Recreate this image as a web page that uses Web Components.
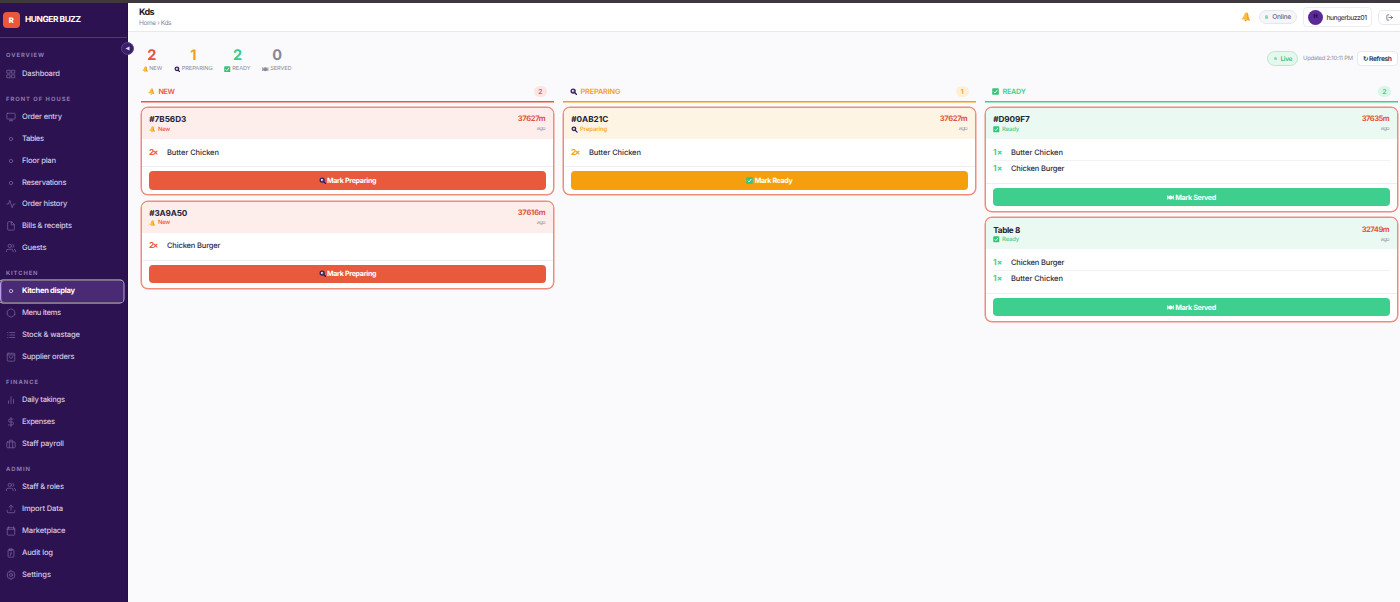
<!DOCTYPE html>
<html lang="en">
<head>
<meta charset="utf-8">
<title>Kds</title>
<style>
html,body{margin:0;height:100%;overflow:hidden;background:#fafafd}
body{font-family:Inter,"Open Sans",sans-serif;color:#24243a;text-rendering:geometricPrecision}
</style>
</head>
<body>
<kds-app></kds-app>
<script>
const define=(name,html,setup)=>customElements.define(name,class extends HTMLElement{
  connectedCallback(){
    if(this.shadowRoot)return;
    const r=this.attachShadow({mode:'open'});
    r.innerHTML=typeof html==='function'?html(this):html;
    if(setup)setup(this,r);
  }
});
const a=(el,n,d='')=>el.getAttribute(n)??d;

/* Single line of text whose tracking is adjusted to a set width */
define('fit-text','<style>:host{display:inline-block;white-space:nowrap;flex:none}span{display:inline-block}</style><span><slot></slot></span>',(el,r)=>{
  const w=parseFloat(a(el,'w')),n=el.textContent.length,s=r.querySelector('span');
  if(!w)return;
  el.style.width=w+'px';
  s.style.letterSpacing='0px';
  s.style.letterSpacing=((w-s.getBoundingClientRect().width)/Math.max(1,n-1)).toFixed(3)+'px';
});

const paths={
 grid:'<rect x="3" y="3" width="7" height="7"/><rect x="14" y="3" width="7" height="7"/><rect x="14" y="14" width="7" height="7"/><rect x="3" y="14" width="7" height="7"/>',
 monitor:'<rect x="2" y="3" width="20" height="14" rx="2"/><path d="M8 21h8M12 17v4"/>',
 dot:'<circle cx="12" cy="12" r="4"/>',
 activity:'<path d="M22 12h-4l-3 9L9 3l-3 9H2"/>',
 file:'<path d="M13 2H6a2 2 0 0 0-2 2v16a2 2 0 0 0 2 2h12a2 2 0 0 0 2-2V9zM13 2v7h7"/>',
 users:'<path d="M17 21v-2a4 4 0 0 0-4-4H5a4 4 0 0 0-4 4v2"/><circle cx="9" cy="7" r="4"/><path d="M23 21v-2a4 4 0 0 0-3-3.87M16 3.13a4 4 0 0 1 0 7.75"/>',
 hex:'<path d="M21 16V8a2 2 0 0 0-1-1.73l-7-4a2 2 0 0 0-2 0l-7 4A2 2 0 0 0 3 8v8a2 2 0 0 0 1 1.73l7 4a2 2 0 0 0 2 0l7-4A2 2 0 0 0 21 16z"/>',
 list:'<path d="M9 6h12M9 12h12M9 18h12M4 6h.5M4 12h.5M4 18h.5"/>',
 bag:'<rect x="3" y="3" width="18" height="19" rx="2"/><path d="M3 7h18M16 11a4 4 0 0 1-8 0"/>',
 bars:'<path d="M18 20V10M12 20V4M6 20v-6"/>',
 dollar:'<path d="M12 1v22M17 5H9.500a3.500 3.500 0 0 0 0 7h5a3.500 3.500 0 0 1 0 7H6"/>',
 case:'<rect x="2" y="7" width="20" height="14" rx="2"/><path d="M8 21V5a2 2 0 0 1 2-2h4a2 2 0 0 1 2 2v16"/>',
 upload:'<path d="M21 15v4a2 2 0 0 1-2 2H5a2 2 0 0 1-2-2v-4M17 8l-5-5-5 5M12 3v12"/>',
 store:'<rect x="3" y="4" width="18" height="18" rx="2"/><path d="M3 8h18M6 2v4M18 2v4"/>',
 clip:'<rect x="5" y="4" width="14" height="18" rx="2"/><path d="M9 2h6v4H9zM12 10v4M12 14l-2 4"/>',
 gear:'<circle cx="12" cy="12" r="3.500"/><path d="M10 2h4l1 3 3-.8 2.500 3.300-1 2.500 2.500 2-2.500 2 1 2.500-2.500 3.300-3-.8-1 3h-4l-1-3-3 .8-2.500-3.300 1-2.500-2.500-2 2.500-2-1-2.500L6 4.200l3 .8z"/>',
 logout:'<path d="M10 21H5a2 2 0 0 1-2-2V5a2 2 0 0 1 2-2h5M17 17l5-5-5-5M22 12H10"/>'
};
define('line-icon',el=>`<style>:host{display:block;flex:none;width:${a(el,'size','10')}px;height:${a(el,'size','10')}px}svg{display:block;width:100%;height:100%;overflow:visible}</style>
<svg viewBox="0 0 24 24" fill="none" stroke="currentColor" stroke-width="${a(el,'sw','1.8')}" stroke-linecap="round" stroke-linejoin="round">${paths[a(el,'name')]}</svg>`);

const pics={
 bell:'<g transform="rotate(8 8 8)"><path d="M8 .8C5.800.8 4.800 3.500 4.300 6.500 3.900 9 2.500 10.500.8 12.500h14.400C13.500 10.500 12.100 9 11.700 6.500 11.200 3.500 10.200.8 8 .8z" fill="#fcbd3c"/><path d="M8.500.8c1.700.3 2.700 2.700 3.200 5.700.4 2.500 1.800 4 3.500 6H11z" fill="#f39a25"/><path d="M6 13.200h4.500L8.200 15.300z" fill="#d9771b"/></g>',
 pan:'<circle cx="7.200" cy="7" r="6" fill="#33205c"/><circle cx="7" cy="6.800" r="2.800" fill="#f3e6ef"/><circle cx="7.400" cy="7.200" r="1.300" fill="#8a5a94"/><path d="M11 11l4 4" stroke="#33205c" stroke-width="3" stroke-linecap="round"/>',
 check:'<rect x=".5" y=".5" width="15" height="15" rx="2" fill="#35c47c"/><path d="M4 8.300l3 3L12.300 4.500" fill="none" stroke="#fff" stroke-width="2"/>',
 plate:'<ellipse cx="8" cy="8" rx="5.500" ry="4.800" fill="currentColor"/><path d="M1.500 3.500v9M14.500 3.500v9" stroke="currentColor" stroke-width="2.200"/>'
};
define('pic-icon',el=>`<style>:host{display:block;flex:none;width:${a(el,'size','6.5')}px;height:${a(el,'size','6.5')}px}svg{display:block;width:100%;height:100%}</style><svg viewBox="0 0 16 16">${pics[a(el,'name')]}</svg>`);

define('nav-item',el=>`<style>
:host{display:block;height:21.8px;padding-top:.6px;box-sizing:border-box;font-size:7.600px;font-weight:500;color:#d3c8e2}
div{height:20.2px;width:122.5px;box-sizing:border-box;padding-left:6px;display:flex;align-items:center;gap:6px;line-height:10px;border-radius:0 4px 4px 0}
line-icon{color:#77659a}
:host([active]) div{background:#4a2975;box-shadow:inset 1.300px 0 #b79bea,0 0 0 .5px #170a33,0 0 0 1.400px #d8d2e3;color:#fff;font-weight:650;border-radius:3px}
:host([active]) line-icon{color:#d8cdf0}
</style><div><line-icon name="${a(el,'icon')}"></line-icon><fit-text w="${a(el,'w')}">${a(el,'label').replace('&','&amp;')}</fit-text></div>`);

define('nav-group',el=>`<style>:host{display:block}p{margin:0;padding:10.9px 0 2.8px 6px;height:8px;line-height:8px;font-size:5.800px;font-weight:650;color:#8d7bab}</style>
<p><fit-text w="${a(el,'w')}">${a(el,'label')}</fit-text></p><slot></slot>`);

const nav=[
 ['OVERVIEW',38,[['grid','Dashboard',38]]],
 ['FRONT OF HOUSE',64,[['monitor','Order entry',40],['dot','Tables',22],['dot','Floor plan',34],['dot','Reservations',44.5],['activity','Order history',45.500],['file','Bills & receipts',50],['users','Guests',24.500]]],
 ['KITCHEN',31.500,[['dot','Kitchen display',53,1],['hex','Menu items',39],['list','Stock & wastage',58],['bag','Supplier orders',52.500]]],
 ['FINANCE',32,[['bars','Daily takings',43],['dollar','Expenses',33],['case','Staff payroll',42]]],
 ['ADMIN',24,[['users','Staff & roles',42],['upload','Import Data',41],['store','Marketplace',43.500],['clip','Audit log',31],['gear','Settings',29]]]
];
define('side-bar',`<style>
:host{display:block;width:128px;background:#2c1251;position:relative;box-sizing:border-box;border-right:1px solid #241044}
header{height:34px;border-bottom:1px solid #7c2b4d;display:flex;align-items:center;padding-left:3px;box-sizing:content-box}
.logo{width:16.500px;height:16.500px;border-radius:4px;background:#e9583b;color:#fff;font-size:7.500px;font-weight:800;display:flex;align-items:center;justify-content:center;margin-right:5.500px}
.name{font-size:8.400px;font-weight:750;color:#fff}
nav{padding-top:3.300px}
.toggle{position:absolute;left:121px;top:38.5px;width:13px;height:13px;box-sizing:border-box;border-radius:50%;background:#3b2069;border:1px solid #57418a;display:flex;align-items:center;justify-content:center;z-index:3}
.toggle svg{width:5px;height:5px}
</style><header><span class="logo">R</span><fit-text class="name" w="56">HUNGER BUZZ</fit-text></header>
<nav>${nav.map(g=>`<nav-group label="${g[0]}" w="${g[1]}">${g[2].map(i=>`<nav-item icon="${i[0]}" label="${i[1].replace('&','&amp;')}" w="${i[2]}" ${i[3]?'active':''}></nav-item>`).join('')}</nav-group>`).join('')}</nav>
<span class="toggle"><svg viewBox="0 0 10 10"><path d="M9 1v8L1 5z" fill="#e3dcf2"/></svg></span>`);

define('top-bar',`<style>
:host{display:flex;height:29px;box-sizing:border-box;background:#fff;border-bottom:1px solid #e9e8f0;padding-left:11px;justify-content:space-between}
.t{display:flex;flex-direction:column;padding-top:4px}
.h{font-size:9px;line-height:12px;font-weight:700;color:#1c1a2e}
.b{font-size:6.500px;line-height:8px;color:#85859a;margin-top:.3px}
.r{display:flex;align-items:center;flex:none;margin-right:-3px}
.on{margin-left:8px;width:38px;height:14.500px;box-sizing:border-box;border:1px solid #e6e6ef;border-radius:8px;background:#f6f6fa;display:flex;align-items:center;padding-left:5px;gap:3.800px;font-size:6.700px;color:#6c6c80;font-weight:450}
i{width:3.400px;height:3.400px;border-radius:50%;background:#7fdcb0}
.u{margin-left:6px;width:69px;height:20px;box-sizing:border-box;border:1px solid #ececf3;border-radius:4px;display:flex;align-items:center;padding-left:4px;gap:3.500px;font-size:6.800px;color:#444457;font-weight:450}
.av{width:15px;height:15px;border-radius:50%;background:#5a2a96;color:#1f0b42;font-weight:800;font-size:5.500px;display:flex;align-items:center;justify-content:center}
.o{margin-left:6px;width:25px;height:15px;box-sizing:border-box;border:1px solid #e8e8ef;border-radius:5px;display:flex;align-items:center;padding-left:7px;color:#55556a}
</style><div class="t"><fit-text class="h" w="15.500">Kds</fit-text><fit-text class="b" w="32.500">Home › Kds</fit-text></div>
<div class="r"><pic-icon name="bell" size="10"></pic-icon><span class="on"><i></i><fit-text w="19">Online</fit-text></span>
<span class="u"><span class="av">H</span><fit-text w="40.500">hungerbuzz01</fit-text></span><span class="o"><line-icon name="logout" size="7" sw="2.500"></line-icon></span></div>`);

define('stat-box',el=>`<style>:host{display:flex;flex-direction:column;align-items:center}
.n{font-size:14.500px;line-height:17px;font-weight:650;color:${a(el,'color')}}
.l{display:flex;align-items:center;gap:1.200px;margin-top:.8px;font-size:5.600px;line-height:8px;color:#8a8a9c}</style>
<span class="n">${a(el,'n')}</span><span class="l"><pic-icon name="${a(el,'icon')}" size="6.500"></pic-icon><fit-text w="${a(el,'w')}">${a(el,'label')}</fit-text></span>`);

define('stats-row',`<style>:host{display:flex;justify-content:space-between;align-items:flex-start;height:51px;box-sizing:border-box;padding:15.200px 0 0 .5px}
.s{display:flex;gap:11.800px}.r{display:flex;align-items:center;height:15px;margin-top:4px;font-size:6px}
.live{width:31px;height:15px;box-sizing:border-box;border:1px solid #b4ebcf;border-radius:8px;background:#e4f8ee;color:#39c283;font-weight:600;font-size:6.500px;display:flex;align-items:center;padding-left:6px;gap:3px}
i{width:3.400px;height:3.400px;border-radius:50%;background:#7ddcae}
.u{margin-left:5px;color:#8d8d9e;font-size:5.900px}
.b{margin-left:4px;width:41px;height:15px;box-sizing:border-box;border:1px solid #e8e8ef;background:#fff;border-radius:4px;display:flex;align-items:center;justify-content:center;gap:.5px;color:#2b2b40;font-weight:600;font-size:6.700px}
.b b{font:700 6.500px "DejaVu Sans",sans-serif}</style>
<div class="s"><stat-box n="2" color="#e9533a" icon="bell" label="NEW" w="13"></stat-box><stat-box n="1" color="#f5a01a" icon="pan" label="PREPARING" w="31"></stat-box><stat-box n="2" color="#3acb87" icon="check" label="READY" w="18.500"></stat-box><stat-box n="0" color="#868698" icon="plate" label="SERVED" w="21.500"></stat-box></div>
<div class="r"><span class="live"><i></i><fit-text w="12">Live</fit-text></span><fit-text class="u" w="50">Updated 2:10:11 PM</fit-text><span class="b"><b>↻</b><fit-text w="23">Refresh</fit-text></span></div>`);

const kinds={
 new:{c:'#e9593c',tint:'#fdeeeb',pic:'bell',cap:'NEW',cw:16.5,st:'New',sw:12,act:'Mark Preparing',aw:49.5,ap:'pan',badge:'#fde5e1'},
 prep:{c:'#f59f0e',tint:'#fef4e4',pic:'pan',cap:'PREPARING',cw:40,st:'Preparing',sw:27,act:'Mark Ready',aw:38,ap:'check',badge:'#fef0d6'},
 ready:{c:'#3ecf8e',tint:'#eafaf2',pic:'check',cap:'READY',cw:23.5,st:'Ready',sw:17,act:'Mark Served',aw:41,ap:'plate',badge:'#daf6e8'}
};
const dishes={'Butter Chicken':52,'Chicken Burger':53.5};

define('order-line',el=>`<style>:host{display:flex;align-items:center;height:16.600px;box-sizing:border-box;border-bottom:1px solid #f1f1f6;font-size:7.500px;color:#28283c;font-weight:450}
:host([last]){border-color:transparent}
.q{width:18px;flex:none;font-size:8.300px;font-weight:650;color:${a(el,'color')};padding-top:1px}</style>
<span class="q"><fit-text w="9.500">${a(el,'q')}×</fit-text></span><fit-text w="${dishes[a(el,'dish')]}">${a(el,'dish')}</fit-text>`);

define('order-card',el=>{const k=kinds[a(el,'kind')];const items=a(el,'items').split(',');return `<style>
:host{display:block;box-sizing:border-box;border:1px solid #ee8c7d;border-radius:7px;overflow:hidden;background:#fff;box-shadow:0 0 0 .5px #ee8c7d}
header{height:31px;background:${k.tint};padding:5.300px 7.300px 0;box-sizing:border-box;display:flex;justify-content:space-between}
.id{display:block;font-size:8.200px;line-height:12px;font-weight:650;color:#25253a}
.st{display:flex;align-items:center;gap:2.300px;height:8px;font-size:5.900px;font-weight:550;color:${k.c}}
.r{display:flex;flex-direction:column;align-items:flex-end;font-size:7.500px;line-height:12px;font-weight:650;color:#e2543c}
.ago{font-size:5.600px;line-height:8px;font-weight:400;color:#9494a4}
.body{padding:5.200px 7px}
footer{border-top:1px solid #eeeef4;padding:4px 7px 4.600px}
.btn{height:18.700px;border-radius:4px;background:${k.c};color:#fff;display:flex;align-items:center;justify-content:center;gap:1.500px;font-size:7.100px;font-weight:650}
</style><header><div><fit-text class="id" w="${a(el,'iw')}">${a(el,'oid')}</fit-text><span class="st"><pic-icon name="${k.pic}"></pic-icon><fit-text w="${k.sw}">${k.st}</fit-text></span></div>
<div class="r"><fit-text w="28">${a(el,'age')}</fit-text><fit-text class="ago" w="9">ago</fit-text></div></header>
<div class="body">${items.map((t,i)=>{const [q,d]=t.split('|');return `<order-line q="${q}" dish="${d}" color="${k.c}" ${i===items.length-1?'last':''}></order-line>`}).join('')}</div>
<footer><div class="btn"><pic-icon name="${k.ap}" size="7"></pic-icon><fit-text w="${k.aw}">${k.act}</fit-text></div></footer>`});

define('board-column',el=>{const k=kinds[a(el,'kind')];return `<style>
:host{display:flex;flex-direction:column;gap:5.200px;min-width:0}
header{height:19.700px;box-sizing:border-box;display:flex;align-items:flex-start;padding:2.500px 7px 0;gap:3.500px;font-size:7.300px;font-weight:600;color:${k.c};margin-bottom:-.7px;background:linear-gradient(${k.c},${k.c}) bottom/100% 1.500px no-repeat}
header>*{height:11px;line-height:11px}.p{display:flex;align-items:center}
.n{margin-left:auto;width:13.500px;border-radius:6px;background:${k.badge};text-align:center;font-size:6.800px}
</style><header><span class="p"><pic-icon name="${k.pic}" size="7"></pic-icon></span><fit-text w="${k.cw}">${k.cap}</fit-text><span class="n">${a(el,'n')}</span></header><slot></slot>`});

define('kds-app',`<style>
:host{display:grid;grid-template:3px minmax(0,1fr) / 128px minmax(0,1fr);height:602px;width:1400px;overflow:hidden}
.strip{grid-column:1/3;background:#3d393e}
side-bar{z-index:2}
.board{display:grid;grid-template-columns:repeat(3,minmax(0,1fr));gap:9px;align-items:start}
.content{padding:0 2px 0 13px}
</style><div class="strip"></div><side-bar></side-bar>
<main><top-bar></top-bar><div class="content"><stats-row></stats-row>
<div class="board">
<board-column kind="new" n="2"><order-card kind="new" oid="#7B56D3" iw="37" age="37627m" items="2|Butter Chicken"></order-card><order-card kind="new" oid="#3A9A50" iw="38" age="37616m" items="2|Chicken Burger"></order-card></board-column>
<board-column kind="prep" n="1"><order-card kind="prep" oid="#0AB21C" iw="37" age="37627m" items="2|Butter Chicken"></order-card></board-column>
<board-column kind="ready" n="2"><order-card kind="ready" oid="#D909F7" iw="36.500" age="37635m" items="1|Butter Chicken,1|Chicken Burger"></order-card><order-card kind="ready" oid="Table 8" iw="27" age="32749m" items="1|Chicken Burger,1|Butter Chicken"></order-card></board-column>
</div></div></main>`);
</script>
</body>
</html>
